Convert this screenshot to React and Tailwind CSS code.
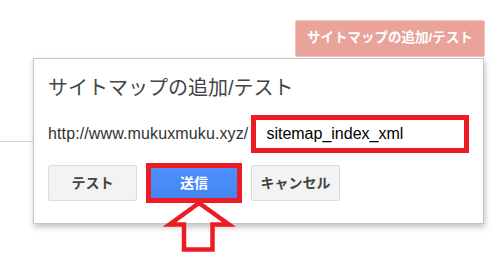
export default function App() {
  return (
    <div className="relative w-[497px] h-[257px] bg-white overflow-hidden font-['Liberation_Sans','Noto_Sans_CJK_JP',sans-serif]">
      {/* page line behind the dialog */}
      <div className="absolute left-0 top-[141px] w-[40px] h-px bg-[#d4d4d4]" />

      <div className="relative flex flex-col pt-[20px]">
        <div className="flex justify-end pr-[12px]">
          <button className="h-[37px] w-[190px] rounded-[2px] border border-[#f4c3bc] bg-[#e9a39a] text-[13.5px] font-bold text-white">
            サイトマップの追加/テスト
          </button>
        </div>

        {/* dialog */}
        <div className="ml-[33px] mt-px w-[451px] h-[166px] border border-[#c6c6c6] bg-white px-[14px] pt-[17px] shadow-[1px_3px_6px_rgba(0,0,0,0.25)]">
          <h2 className="text-[20px] leading-[24px] text-[#444]">サイトマップの追加/テスト</h2>

          <div className="mt-[15px] flex items-center gap-[3px]">
            <span className="text-[16px] tracking-[0.12px] text-[#333]">http://www.mukuxmuku.xyz/</span>
            <div className="flex h-[38px] w-[222px] items-center border-[5px] border-[#ed1c24] bg-white pl-[10px] text-[16px] text-black">
              sitemap_index_xml
            </div>
          </div>

          <div className="mt-[12px] flex items-center gap-[14px]">
            <button className="h-[36px] w-[89px] rounded-[2px] border border-[#dcdcdc] bg-[#f3f3f3] text-[14px] font-bold text-[#444]">
              テスト
            </button>
            <button className="h-[30px] w-[86px] bg-gradient-to-b from-[#4d90fe] to-[#4485f0] text-[14px] font-bold text-white outline-[5px] outline-solid outline-[#ed1c24]">
              送信
            </button>
            <button className="h-[36px] w-[89px] rounded-[2px] border border-[#dcdcdc] bg-[#f3f3f3] text-[14px] font-bold text-[#444]">
              キャンセル
            </button>
          </div>
        </div>
      </div>

      {/* annotation arrow */}
      <svg className="absolute left-0 top-0" width="497" height="257" viewBox="0 0 497 257">
        <polygon
          points="199,203 169.5,224.5 184,224.5 184,249.5 212.5,249.5 212.5,224.5 229,224.5"
          fill="none"
          stroke="#ed1c24"
          strokeWidth="4.5"
          strokeLinejoin="miter"
        />
      </svg>
    </div>
  );
}
